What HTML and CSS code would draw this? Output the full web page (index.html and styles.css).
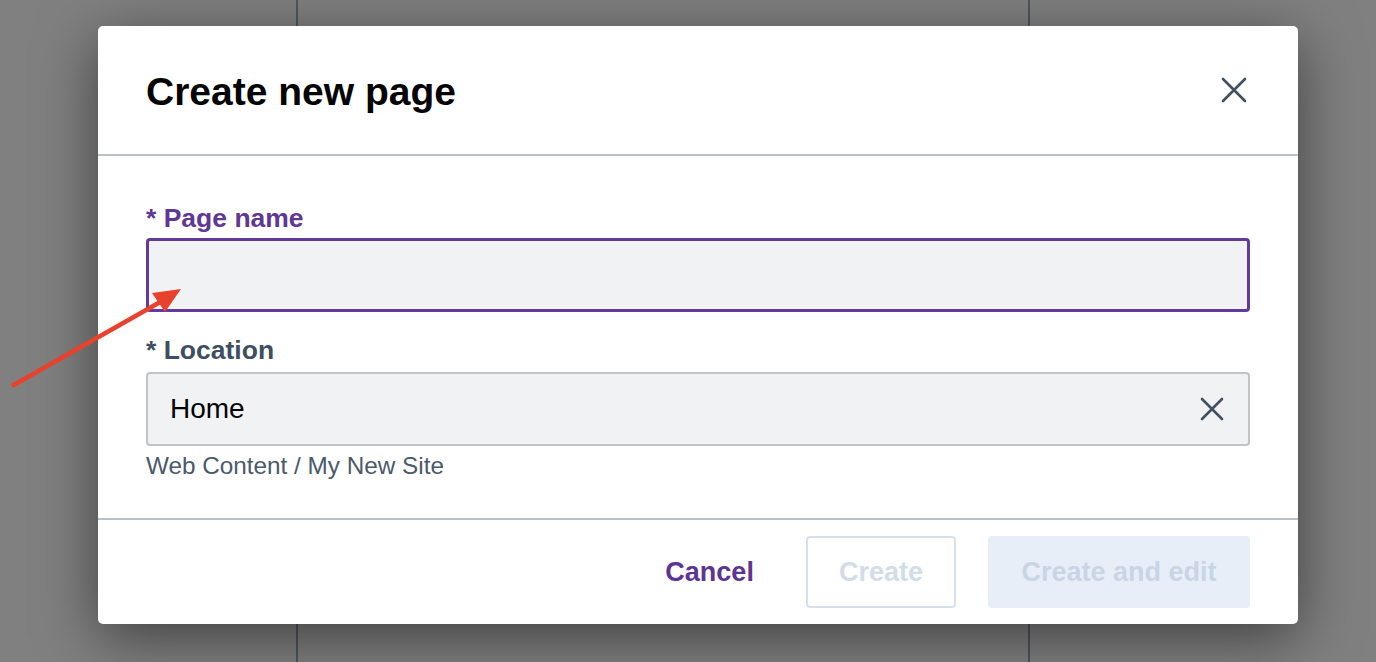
FILE: index.html
```html
<!DOCTYPE html>
<html lang="en">
<head>
<meta charset="utf-8">
<title>Create new page</title>
<link rel="stylesheet" href="styles.css">
</head>
<body>
<div class="modal">
  <div class="modal-header">
    <h1 class="modal-title">Create new page</h1>
    <button class="icon-btn close-btn" aria-label="Close">
      <svg width="26" height="26" viewBox="0 0 26 26"><path d="M2 2 L24 24 M24 2 L2 24" stroke="#3f5263" stroke-width="2.6" stroke-linecap="round" fill="none"/></svg>
    </button>
  </div>
  <div class="modal-body">
    <label class="field-label active">* Page name</label>
    <div class="input input-active"></div>
    <label class="field-label loc">* Location</label>
    <div class="input input-loc">
      <span class="input-value">Home</span>
      <svg width="24" height="24" viewBox="0 0 24 24"><path d="M2 2 L22 22 M22 2 L2 22" stroke="#3f5263" stroke-width="2.6" stroke-linecap="round" fill="none"/></svg>
    </div>
    <div class="help">Web Content / My New Site</div>
  </div>
  <div class="modal-footer">
    <button class="btn btn-link">Cancel</button>
    <button class="btn btn-outline">Create</button>
    <button class="btn btn-solid">Create and edit</button>
  </div>
</div>
<svg class="annot" width="1376" height="662" viewBox="0 0 1376 662">
  <line x1="12" y1="386" x2="162" y2="301" stroke="#e8412c" stroke-width="4.5"/>
  <polygon points="181,289 152,293 165,312" fill="#e8412c"/>
</svg>
</body>
</html>
```
FILE: styles.css
```css
html, body {
  margin: 0;
  height: 100%;
}
body {
  width: 1376px;
  height: 662px;
  overflow: hidden;
  box-sizing: border-box;
  padding: 26px 0 0 98px;
  font-family: "Liberation Sans", Arial, sans-serif;
  background-color: #808080;
  background-image: linear-gradient(to right,
    transparent 296px, #50565c 296px, #50565c 298px, transparent 298px,
    transparent 1028px, #50565c 1028px, #50565c 1030px, transparent 1030px);
  position: relative;
}
.modal {
  width: 1200px;
  height: 598px;
  background: #fff;
  border-radius: 5px;
  box-shadow: 0 14px 60px rgba(0, 0, 0, 0.5);
  display: flex;
  flex-direction: column;
}
.modal-header {
  height: 128px;
  padding: 0 48px;
  display: flex;
  align-items: center;
  justify-content: space-between;
  border-bottom: 2px solid #b9c0c8;
  box-sizing: content-box;
}
.modal-title {
  margin: 0;
  font-size: 39px;
  font-weight: 700;
  color: #050505;
  line-height: 48px;
  margin-top: 4px;
}
.icon-btn {
  background: none;
  border: 0;
  padding: 0;
  display: flex;
}
.close-btn {
  margin-right: 3px;
}
.modal-body {
  height: 362px;
  box-sizing: border-box;
  padding: 46px 48px 38px;
  display: flex;
  flex-direction: column;
}
.field-label {
  font-size: 26.5px;
  font-weight: 700;
  line-height: 32px;
  color: #3e4f61;
}
.field-label.active {
  color: #5f3894;
  margin-bottom: 4px;
}
.field-label.loc {
  margin-top: 22px;
  margin-bottom: 6px;
}
.input {
  height: 74px;
  box-sizing: border-box;
  background: #f1f2f4;
  border-radius: 4px;
}
.input-active {
  border: 3px solid #633a9a;
}
.input-loc {
  border: 2px solid #c2c3c5;
  display: flex;
  align-items: center;
  justify-content: space-between;
  padding: 0 24px 0 22px;
}
.input-value {
  font-size: 28px;
  color: #050505;
}
.help {
  margin-top: 6px;
  font-size: 24.3px;
  line-height: 28px;
  color: #4a5a6b;
}
.modal-footer {
  flex: 1;
  border-top: 2px solid #b9c0c8;
  padding: 16px 48px;
  display: flex;
  justify-content: flex-end;
  align-items: stretch;
  gap: 32px;
}
.btn {
  font-family: "Liberation Sans", Arial, sans-serif;
  font-size: 27px;
  font-weight: 700;
  height: 72px;
  border-radius: 4px;
  padding: 0 32px;
  box-sizing: border-box;
}
.btn-link {
  background: none;
  border: 0;
  color: #5c3592;
  padding: 0 20px;
}
.btn-outline {
  background: #fff;
  border: 2px solid #d6e1ee;
  color: #d2ddea;
  padding: 0 31px;
}
.btn-solid {
  background: #e7eef7;
  border: 0;
  color: #c7d5e6;
  padding: 0 33.5px;
}
.annot {
  position: absolute;
  left: 0;
  top: 0;
  pointer-events: none;
}
```
